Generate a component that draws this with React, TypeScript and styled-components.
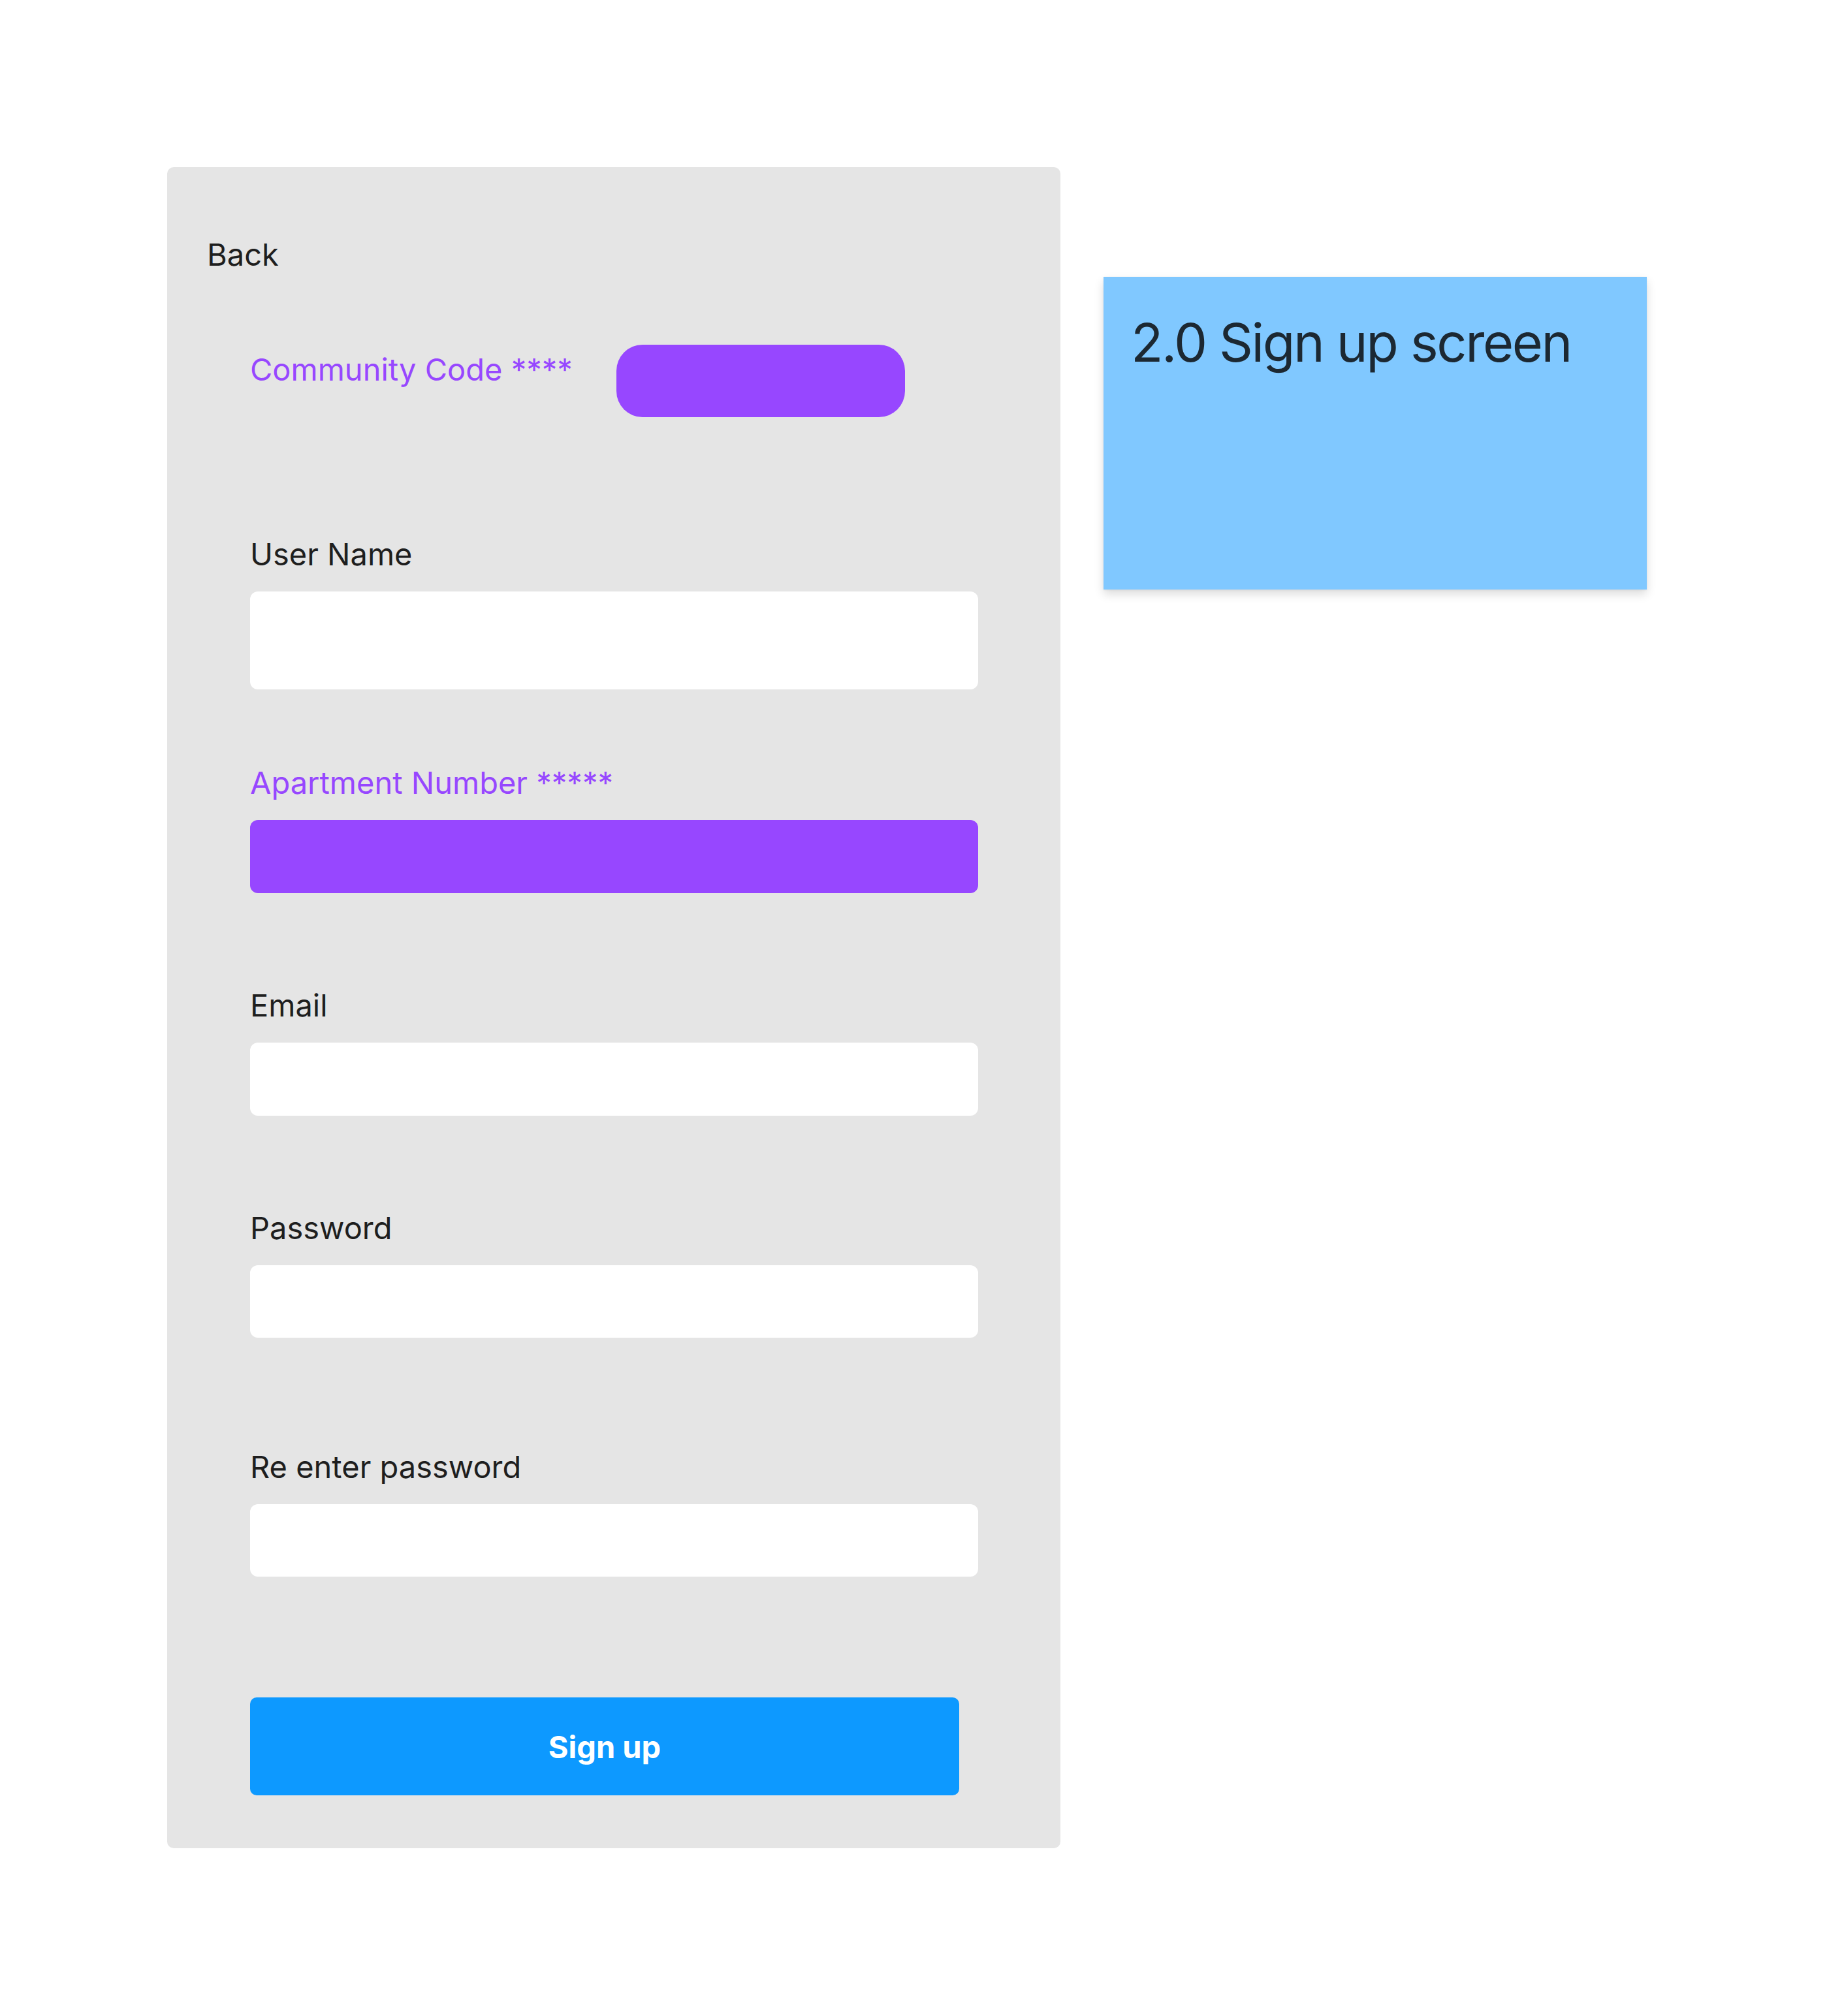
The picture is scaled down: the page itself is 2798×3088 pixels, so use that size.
import React from "react";
import styled, { createGlobalStyle } from "styled-components";

const GlobalStyle = createGlobalStyle`
  html, body {
    margin: 0;
    padding: 0;
    background: #ffffff;
  }
  body {
    font-family: Inter, "Noto Sans", "Liberation Sans", sans-serif;
  }
`;

const Canvas = styled.div`
  display: flex;
  align-items: flex-start;
  gap: 66px;
  padding: 256px 0 0 256px;
  min-height: 3088px;
  box-sizing: border-box;
`;

const Phone = styled.section`
  width: 1368px;
  box-sizing: border-box;
  background: #e5e5e5;
  border-radius: 10px;
  padding: 105px 0 81px 0;
  display: flex;
  flex-direction: column;
`;

const BackLink = styled.div`
  margin-left: 61px;
  font-size: 47px;
  line-height: 57px;
  color: #1e1e1e;
`;

const Content = styled.div`
  margin-left: 127px;
  display: flex;
  flex-direction: column;
`;

const CodeRow = styled.div`
  margin-top: 110px;
  display: grid;
  grid-template-columns: 561px 442px;
  align-items: start;
`;

const Label = styled.div<{ $accent?: boolean; $offset?: number }>`
  font-size: 47px;
  line-height: 57px;
  color: ${(p) => (p.$accent ? "#9747ff" : "#1e1e1e")};
  margin-top: ${(p) => p.$offset ?? 0}px;
  white-space: nowrap;
`;

const Pill = styled.div`
  height: 111px;
  border-radius: 40px;
  background: #9747ff;
`;

const Field = styled.div<{ $top: number }>`
  margin-top: ${(p) => p.$top}px;
  display: flex;
  flex-direction: column;
  gap: 29px;
`;

const Input = styled.div<{ $h: number; $accent?: boolean }>`
  width: 1115px;
  height: ${(p) => p.$h}px;
  border-radius: 12px;
  background: ${(p) => (p.$accent ? "#9747ff" : "#ffffff")};
`;

const SignUpButton = styled.button`
  margin-top: 185px;
  width: 1086px;
  height: 150px;
  border: none;
  border-radius: 10px;
  background: #0d99ff;
  color: #ffffff;
  font-family: Inter, "Noto Sans", "Liberation Sans", sans-serif;
  font-weight: 700;
  font-size: 47px;
  line-height: 57px;
  padding: 0;
  cursor: pointer;
`;

const Sticky = styled.aside`
  margin-top: 168px;
  width: 832px;
  height: 479px;
  box-sizing: border-box;
  padding: 52px 30px 0 42px;
  background: #80c8ff;
  box-shadow: 0 7px 14px rgba(0, 0, 0, 0.14), 0 1px 3px rgba(0, 0, 0, 0.06);
`;

const StickyText = styled.div`
  font-size: 81px;
  line-height: 98px;
  letter-spacing: -2.4px;
  color: #1c2832;
`;

const fields = [
  { label: "User Name", top: 181, h: 150 },
  { label: "Apartment Number *****", top: 114, h: 112, accent: true },
  { label: "Email", top: 143, h: 112 },
  { label: "Password", top: 143, h: 111 },
  { label: "Re enter password", top: 169, h: 111 },
];

export default function App() {
  return (
    <>
      <GlobalStyle />
      <Canvas>
        <Phone>
          <BackLink>Back</BackLink>
          <Content>
            <CodeRow>
              <Label $accent $offset={9}>
                Community Code ****
              </Label>
              <Pill />
            </CodeRow>
            {fields.map((f) => (
              <Field key={f.label} $top={f.top}>
                <Label $accent={f.accent}>{f.label}</Label>
                <Input $h={f.h} $accent={f.accent} />
              </Field>
            ))}
            <SignUpButton>Sign up</SignUpButton>
          </Content>
        </Phone>
        <Sticky>
          <StickyText>2.0 Sign up screen</StickyText>
        </Sticky>
      </Canvas>
    </>
  );
}
